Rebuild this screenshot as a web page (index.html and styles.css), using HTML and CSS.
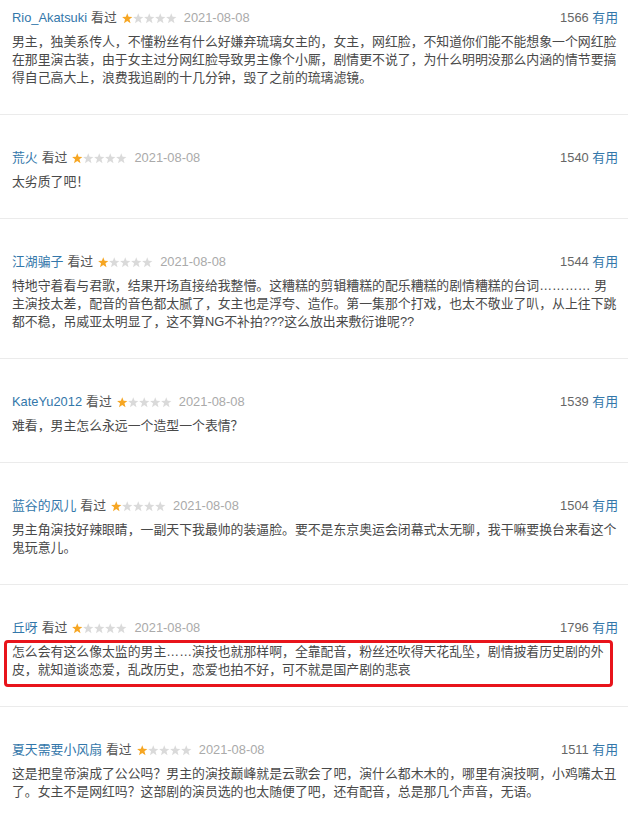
FILE: index.html
```html
<!DOCTYPE html>
<html lang="zh-CN">
<head>
<meta charset="utf-8">
<title>短评</title>
<link rel="stylesheet" href="styles.css">
</head>
<body>
<div class="list">
  <div class="item first">
    <div class="head">
      <span class="user">Rio_Akatsuki</span><span class="seen">看过</span>
      <svg class="stars" viewBox="0 0 55 11" width="55" height="11"><use href="#s1"/></svg>
      <span class="date">2021-08-08</span>
      <span class="votes">1566 <a class="useful">有用</a></span>
    </div>
    <p class="text">男主，独美系传人，不懂粉丝有什么好嫌弃琉璃女主的，女主，网红脸，不知道你们能不能想象一个网红脸在那里演古装，由于女主过分网红脸导致男主像个小厮，剧情更不说了，为什么明明没那么内涵的情节要搞得自己高大上，浪费我追剧的十几分钟，毁了之前的琉璃滤镜。</p>
  </div>
  <div class="item">
    <div class="head">
      <span class="user">荒火</span><span class="seen">看过</span>
      <svg class="stars" viewBox="0 0 55 11" width="55" height="11"><use href="#s1"/></svg>
      <span class="date">2021-08-08</span>
      <span class="votes">1540 <a class="useful">有用</a></span>
    </div>
    <p class="text">太劣质了吧！</p>
  </div>
  <div class="item">
    <div class="head">
      <span class="user">江湖骗子</span><span class="seen">看过</span>
      <svg class="stars" viewBox="0 0 55 11" width="55" height="11"><use href="#s1"/></svg>
      <span class="date">2021-08-08</span>
      <span class="votes">1544 <a class="useful">有用</a></span>
    </div>
    <p class="text">特地守着看与君歌，结果开场直接给我整懵。这糟糕的剪辑糟糕的配乐糟糕的剧情糟糕的台词………… 男主演技太差，配音的音色都太腻了，女主也是浮夸、造作。第一集那个打戏，也太不敬业了叭，从上往下跳都不稳，吊威亚太明显了，这不算NG不补拍???这么放出来敷衍谁呢??</p>
  </div>
  <div class="item">
    <div class="head">
      <span class="user">KateYu2012</span><span class="seen">看过</span>
      <svg class="stars" viewBox="0 0 55 11" width="55" height="11"><use href="#s1"/></svg>
      <span class="date">2021-08-08</span>
      <span class="votes">1539 <a class="useful">有用</a></span>
    </div>
    <p class="text">难看，男主怎么永远一个造型一个表情？</p>
  </div>
  <div class="item">
    <div class="head">
      <span class="user">蓝谷的风儿</span><span class="seen">看过</span>
      <svg class="stars" viewBox="0 0 55 11" width="55" height="11"><use href="#s1"/></svg>
      <span class="date">2021-08-08</span>
      <span class="votes">1504 <a class="useful">有用</a></span>
    </div>
    <p class="text">男主角演技好辣眼睛，一副天下我最帅的装逼脸。要不是东京奥运会闭幕式太无聊，我干嘛要换台来看这个鬼玩意儿。</p>
  </div>
  <div class="item">
    <div class="head">
      <span class="user">丘呀</span><span class="seen">看过</span>
      <svg class="stars" viewBox="0 0 55 11" width="55" height="11"><use href="#s1"/></svg>
      <span class="date">2021-08-08</span>
      <span class="votes">1796 <a class="useful">有用</a></span>
    </div>
    <p class="text marked">怎么会有这么像太监的男主……演技也就那样啊，全靠配音，粉丝还吹得天花乱坠，剧情披着历史剧的外皮，就知道谈恋爱，乱改历史，恋爱也拍不好，可不就是国产剧的悲哀</p>
  </div>
  <div class="item">
    <div class="head">
      <span class="user">夏天需要小风扇</span><span class="seen">看过</span>
      <svg class="stars" viewBox="0 0 55 11" width="55" height="11"><use href="#s1"/></svg>
      <span class="date">2021-08-08</span>
      <span class="votes">1511 <a class="useful">有用</a></span>
    </div>
    <p class="text">这是把皇帝演成了公公吗？男主的演技巅峰就是云歌会了吧，演什么都木木的，哪里有演技啊，小鸡嘴太丑了。女主不是网红吗？这部剧的演员选的也太随便了吧，还有配音，总是那几个声音，无语。</p>
  </div>
</div>
<svg class="defs" width="0" height="0" aria-hidden="true">
  <defs>
    <polygon id="st" points="5.25,0.2 6.6,3.8 10.4,3.95 7.45,6.35 8.5,10.2 5.25,8.05 2,10.2 3.05,6.35 0.1,3.95 3.9,3.8"/>
    <g id="s1">
      <use href="#st" x="0" fill="#f6a623"/>
      <use href="#st" x="11" fill="#dadada"/>
      <use href="#st" x="22" fill="#dadada"/>
      <use href="#st" x="33" fill="#dadada"/>
      <use href="#st" x="44" fill="#dadada"/>
    </g>
  </defs>
</svg>
</body>
</html>
```
FILE: styles.css
```css
html, body {
  margin: 0;
  padding: 0;
  background: #fff;
}
body {
  font-family: "Liberation Sans", Arial, "Noto Sans CJK SC", sans-serif;
  font-size: 12.87px;
  color: #494949;
}
.list {
  width: 628px;
}
.item {
  padding: 34px 10px 27px 12px;
  border-bottom: 1px solid #ebebeb;
}
.item.first {
  padding-top: 9px;
}
.head {
  display: flex;
  align-items: center;
  height: 18px;
  line-height: 18px;
}
.user {
  color: #3377aa;
}
.seen {
  margin-left: 4px;
  color: #555;
}
.stars {
  margin-left: 5px;
  display: block;
}
.date {
  margin-left: 7px;
  color: #aaa;
}
.votes {
  margin-left: auto;
  color: #666;
}
.useful {
  color: #3377aa;
}
.text {
  margin: 6px 0 0 0;
  line-height: 18px;
  width: 606px;
}
.marked {
  position: relative;
}
.marked::after {
  content: "";
  position: absolute;
  left: -8px;
  right: 5px;
  top: -3px;
  bottom: -8px;
  border: 3px solid #e8141b;
  border-radius: 4px;
}
.defs {
  position: absolute;
}
```
